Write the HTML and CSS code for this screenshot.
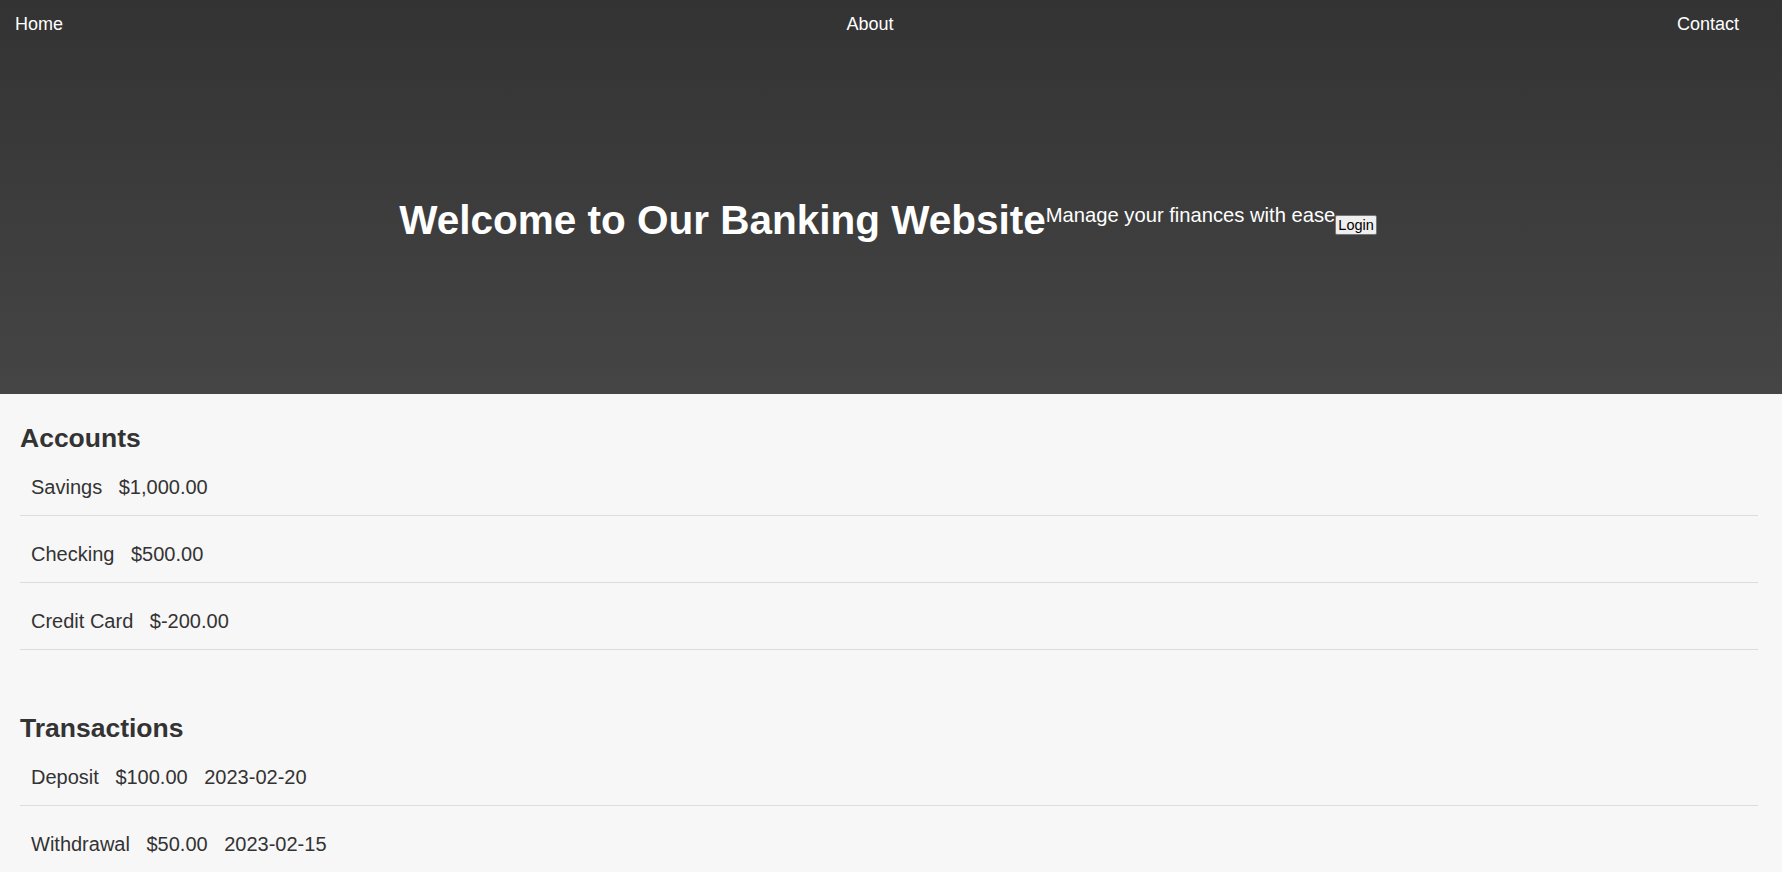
FILE: index.html
```html
<!DOCTYPE html>
<html lang="en">
<head>
<meta charset="utf-8">
<title>Banking Website</title>
<link rel="stylesheet" href="styles.css">
</head>
<body>
<header class="site-header">
  <nav class="nav">
    <ul class="nav-list">
      <li class="nav-item"><a class="nav-link" href="#">Home</a></li>
      <li class="nav-item"><a class="nav-link" href="#">About</a></li>
      <li class="nav-item"><a class="nav-link" href="#">Contact</a></li>
    </ul>
  </nav>
  <section class="hero">
    <h1 class="hero-title">Welcome to Our Banking Website</h1>
    <p class="hero-sub">Manage your finances with ease</p>
    <button class="hero-btn" type="button">Login</button>
  </section>
</header>
<main class="content">
  <section class="panel">
    <h2 class="panel-title">Accounts</h2>
    <ul class="rows">
      <li class="row"><span class="cell">Savings</span> <span class="cell">$1,000.00</span></li>
      <li class="row"><span class="cell">Checking</span> <span class="cell">$500.00</span></li>
      <li class="row"><span class="cell">Credit Card</span> <span class="cell">$-200.00</span></li>
    </ul>
  </section>
  <section class="panel">
    <h2 class="panel-title">Transactions</h2>
    <ul class="rows">
      <li class="row"><span class="cell">Deposit</span> <span class="cell">$100.00</span> <span class="cell">2023-02-20</span></li>
      <li class="row"><span class="cell">Withdrawal</span> <span class="cell">$50.00</span> <span class="cell">2023-02-15</span></li>
    </ul>
  </section>
</main>
</body>
</html>
```
FILE: styles.css
```css
* { box-sizing: border-box; }

html, body {
  margin: 0;
  padding: 0;
}

body {
  font-family: "Liberation Sans", Arial, sans-serif;
  background: #f7f7f7;
  color: #333;
}

.site-header {
  background: linear-gradient(to bottom, #333333 0%, #454545 100%);
  color: #fff;
  height: 394px;
  display: flex;
  flex-direction: column;
}

.nav {
  height: 56px;
  padding: 14px 23px 0 15px;
}

.nav-list {
  list-style: none;
  margin: 0;
  padding: 0;
  display: flex;
  justify-content: space-between;
}

.nav-item {
  margin-right: 20px;
  font-size: 18px;
}

.nav-link {
  color: #fff;
  text-decoration: none;
}

.hero {
  flex: 1;
  display: flex;
  align-items: center;
  justify-content: center;
  padding-right: 6px;
}

.hero-title {
  font-size: 40.5px;
  font-weight: bold;
  margin: 0 0 10px;
  white-space: nowrap;
}

.hero-sub {
  font-size: 20.2px;
  margin: 0 0 20px;
  white-space: nowrap;
}

.hero-btn {
  font-family: "Liberation Sans", Arial, sans-serif;
  font-size: 14.5px;
  color: #000;
  background: #efefef;
  border: 1px solid #767676;
  border-radius: 2px;
  padding: 1px 2px;
  line-height: normal;
}

.content {
  padding: 0;
}

.panel {
  padding: 19px 24px 24px 20px;
}

.panel-title {
  font-size: 26.5px;
  font-weight: bold;
  margin: 10px 0 5px;
  color: #333;
}

.rows {
  list-style: none;
  margin: 0;
  padding: 0;
}

.row {
  font-size: 20px;
  padding: 17px 11px 16px;
  margin-bottom: 10px;
  border-bottom: 1px solid #dddddd;
}

.cell {
  margin-right: 11px;
}
```
